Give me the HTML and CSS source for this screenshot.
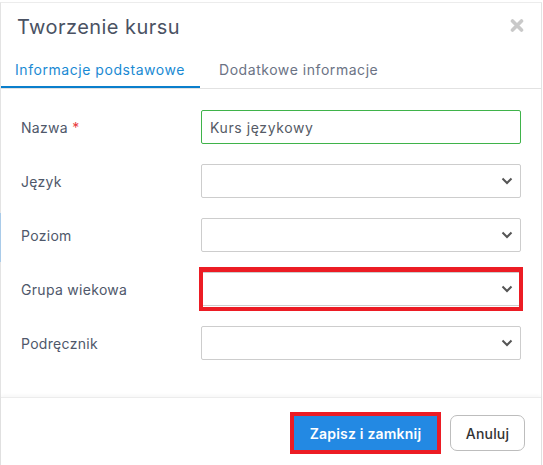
FILE: index.html
```html
<!DOCTYPE html>
<html lang="pl">
<head>
<meta charset="utf-8">
<title>Tworzenie kursu</title>
<link rel="stylesheet" href="styles.css">
</head>
<body>
<div class="bg-accent"></div>
<div class="modal">
  <div class="modal-header">
    <h2 class="modal-title">Tworzenie kursu</h2>
    <button class="close" aria-label="Zamknij">
      <svg width="14" height="13" viewBox="0 0 14 13"><path d="M2.5 2 L11.5 11 M11.5 2 L2.5 11" stroke="#c9c9c9" stroke-width="3.6" stroke-linecap="round"/></svg>
    </button>
  </div>
  <div class="tabs">
    <div class="tab active">Informacje podstawowe</div>
    <div class="tab">Dodatkowe informacje</div>
  </div>
  <div class="modal-body">
    <div class="form-row">
      <label class="label">Nazwa <span class="req">*</span></label>
      <div class="control"><div class="input valid">Kurs językowy</div></div>
    </div>
    <div class="form-row">
      <label class="label">Język</label>
      <div class="control"><div class="input select"><svg class="chev" width="12" height="8" viewBox="0 0 12 8"><path d="M1.5 1.5 L6 6 L10.5 1.5" fill="none" stroke="#555" stroke-width="2"/></svg></div></div>
    </div>
    <div class="form-row">
      <label class="label">Poziom</label>
      <div class="control"><div class="input select"><svg class="chev" width="12" height="8" viewBox="0 0 12 8"><path d="M1.5 1.5 L6 6 L10.5 1.5" fill="none" stroke="#555" stroke-width="2"/></svg></div></div>
    </div>
    <div class="form-row">
      <label class="label">Grupa wiekowa</label>
      <div class="control marked"><div class="input select"><svg class="chev" width="12" height="8" viewBox="0 0 12 8"><path d="M1.5 1.5 L6 6 L10.5 1.5" fill="none" stroke="#555" stroke-width="2"/></svg></div></div>
    </div>
    <div class="form-row">
      <label class="label">Podręcznik</label>
      <div class="control"><div class="input select"><svg class="chev" width="12" height="8" viewBox="0 0 12 8"><path d="M1.5 1.5 L6 6 L10.5 1.5" fill="none" stroke="#555" stroke-width="2"/></svg></div></div>
    </div>
  </div>
  <div class="modal-footer">
    <button class="btn btn-primary">Zapisz i zamknij</button>
    <button class="btn btn-default">Anuluj</button>
  </div>
</div>
</body>
</html>
```
FILE: styles.css
```css
* { box-sizing: border-box; }
html, body { margin: 0; padding: 0; }
body {
  background: #ffffff;
  font-family: Inter, "Open Sans", "Liberation Sans", sans-serif;
  width: 543px;
  height: 465px;
  overflow: hidden;
  position: relative;
}
.bg-accent {
  position: absolute;
  left: 0;
  top: 213px;
  width: 1px;
  height: 49px;
  background: #a9cbe9;
  z-index: 2;
}
.modal {
  margin-top: 2px;
  width: 542px;
  height: 470px;
  background: #fff;
  border-top: 1px solid #ececec;
  border-left: 1px solid #e3e3e3;
  border-right: 1px solid #e3e3e3;
  display: flex;
  flex-direction: column;
}
.modal-header {
  height: 47px;
  display: flex;
  align-items: center;
  justify-content: space-between;
  padding: 0 17px 0 16px;
}
.modal-title {
  margin: 0;
  font-size: 20px;
  font-weight: 400;
  color: #4a5263;
  letter-spacing: 0.45px;
}
.close {
  background: none;
  border: 0;
  padding: 0;
  width: 14px;
  height: 13px;
  display: block;
  margin-top: -2px;
}
.close svg { display: block; }
.tabs {
  height: 39px;
  display: flex;
  border-bottom: 1px solid #e2e2e2;
}
.tab {
  padding: 0 14px;
  height: 38px;
  display: flex;
  align-items: center;
  font-size: 14px;
  color: #6b7385;
  letter-spacing: 0.55px;
}
.tab.active {
  color: #1a8ad3;
  border-bottom: 2px solid #0a7fcc;
  padding: 3px 15px 0 14px;
}
.tab + .tab { margin-left: 5px; }
.modal-body {
  padding: 21px 20px 37px 20px;
  display: flex;
  flex-direction: column;
  gap: 20px;
}
.form-row {
  display: grid;
  grid-template-columns: 180px 320px;
  align-items: center;
}
.label {
  font-size: 14px;
  color: #4f586a;
  letter-spacing: 0.3px;
}
.req { color: #e83c3c; }
.control { position: relative; }
.input {
  height: 34px;
  border: 1px solid #cdcdcd;
  border-radius: 2px;
  background: #fff;
  display: flex;
  align-items: center;
  padding: 0 8px;
  font-size: 14px;
  color: #555b66;
  letter-spacing: 0.6px;
}
.input.valid { border-color: #3fb34a; }
.select { justify-content: flex-end; padding-right: 7px; }
.chev { display: block; }
.control.marked::after {
  content: "";
  position: absolute;
  left: -2px;
  right: -2px;
  top: -5px;
  bottom: -5px;
  border: 4px solid #ec1c24;
  border-width: 5px 4px 4px 4px;
  pointer-events: none;
}
.modal-footer {
  border-top: 1px solid #ececec;
  box-shadow: 0 -2px 3px rgba(0,0,0,0.03);
  display: flex;
  justify-content: flex-end;
  align-items: flex-start;
  gap: 13px;
  padding: 17px 16px 0 0;
  flex: 1;
}
.btn {
  font-family: inherit;
  font-size: 14px;
  height: 34px;
  border-radius: 6px;
  padding: 0 12px;
  cursor: pointer;
  letter-spacing: 0.2px;
}
.btn-primary {
  background: #2389e3;
  border: 0;
  color: #fff;
  font-weight: 600;
  border-radius: 0;
  width: 143px;
  margin-top: 1px;
  outline: 4px solid #ec1c24;
  outline-offset: 0;
}
.btn-default {
  background: #fff;
  border: 1px solid #bdbdbd;
  color: #333;
  width: 75px;
  height: 36px;
  font-weight: 500;
  border-radius: 7px;
}
```
